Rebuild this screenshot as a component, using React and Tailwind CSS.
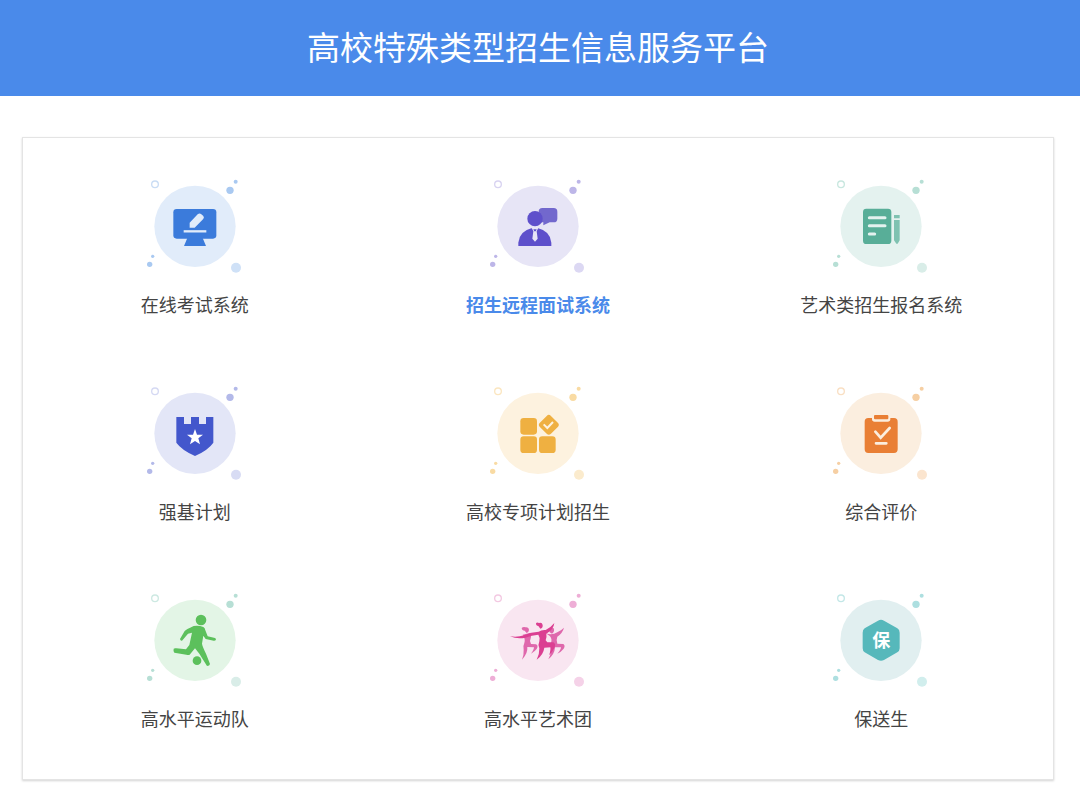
import React from "react";

const ExamIcon = () => (
  <g fill="#3b7bdb">
    <rect x="115" y="108" width="129" height="89" rx="10" />
    <path d="M157 195 L203 195 L213 219 L147 219 Z" />
    <path d="M146 175 H214" stroke="#e1ecfa" strokeWidth="7" />
    <path
      d="M164 164 L164 149 L188 124 Q194 119 199 124 L205 129 Q209 134 204 139 L179 164 Z"
      fill="#e1ecfa"
    />
  </g>
);

const InterviewIcon = () => (
  <g fill="#5e50cb">
    <path
      d="M193 105 H227 Q238 105 238 116 V137 Q238 148 227 148 H215 L196 157 V148 H190 Q182 148 182 140 V116 Q182 105 193 105 Z"
      fill="#7268cd"
    />
    <circle cx="171" cy="137" r="23" />
    <path d="M121 219 V209 Q124 175 160 166 H181 Q217 175 220 209 V219 Z" />
    <path d="M160 163 H182 L176 175 L179 197 L171 206 L163 197 L166 175 Z" fill="#e7e5f6" />
    <path d="M166 169 H176 L173 175 H169 Z" />
  </g>
);

const SignUpIcon = () => (
  <g>
    <rect x="126" y="107" width="85" height="106" rx="10" fill="#58ae98" />
    <path
      d="M145 134 H192 M145 158 H192 M145 183 H161"
      stroke="#e4f2ef"
      strokeWidth="9"
      strokeLinecap="round"
    />
    <path d="M219 126 H236 V136 H219 Z M219 141 H236 V202 L230 212 H226 L219 202 Z" fill="#7fc2b1" />
  </g>
);

const StrongBaseIcon = () => (
  <g>
    <path
      d="M124 111 H147 V132 H168 V111 H192 V132 H213 V111 H235 V188 Q220 210 180 228 Q140 210 124 188 Z"
      fill="#4357cc"
    />
    <path
      d="M180 147 L186 164 L204 164 L190 175 L195 193 L180 183 L165 193 L170 175 L156 164 L174 164 Z"
      fill="#fff"
    />
  </g>
);

const SpecialPlanIcon = () => (
  <g fill="#efb041">
    <rect x="127" y="114" width="50" height="50" rx="10" />
    <rect x="127" y="169" width="50" height="50" rx="10" />
    <rect x="183" y="169" width="50" height="50" rx="10" />
    <rect x="189" y="111" width="47" height="47" rx="9" transform="rotate(45 212.5 134.5)" />
    <path d="M197 133 L208 144 L225 126" fill="none" stroke="#fdf2df" strokeWidth="6" />
  </g>
);

const EvaluationIcon = () => (
  <g fill="#e97f35">
    <path d="M142 114 H153 V118 Q153 125 161 125 H200 Q208 125 208 118 V114 H219 Q230 114 230 125 V208 Q230 219 219 219 H142 Q131 219 131 208 V125 Q131 114 142 114 Z" />
    <rect x="159" y="105" width="43" height="13" rx="3" />
    <path
      d="M163 155 L179 173 L206 144 M165 190 H196"
      fill="none"
      stroke="#fbeedf"
      strokeWidth="8"
      strokeLinecap="round"
    />
  </g>
);

const SportsIcon = () => (
  <g fill="#5cc05c">
    <circle cx="198" cy="99" r="16" />
    <path d="M176 117 Q191 114 205 120 Q210 123 211 130 L218 148 L240 153 Q245 155 242 160 Q239 162 236 161 L212 156 L205 146 L201 170 Q203 180 213 200 L225 231 Q224 237 216 237 L193 200 L180 184 L164 203 Q161 205 154 203 L118 197 Q114 194 116 185 Q118 183 124 184 L153 187 L163 174 L171 137 L159 140 L141 161 Q136 162 135 156 L149 132 Q152 128 176 117 Z" />
    <circle cx="186" cy="221" r="13" />
  </g>
);

const ArtIcon = () => (
  <g>
    {/* Left dancer */}
    <g fill="#df68ac">
      <path d="M131 123 Q136 118 143 121 Q152 120 153 129 Q152 137 146 138 L140 131 Q132 131 131 123 Z" />
      <path d="M134 143 L158 137 Q161 151 156 162 L159 171 L174 172 Q182 176 176 186 Q170 194 159 200 Q168 188 168 181 L148 180 Q150 199 132 218 Q138 202 137 188 Q134 178 139 168 Q143 156 134 143 Z" />
    </g>

    {/* Right dancer */}
    <g fill="#df68ac">
      <path d="M213 125 Q220 118 227 124 Q231 134 222 140 L215 136 Z" />
      <path d="M204 139 Q222 146 238 136 Q250 130 258 122 Q254 138 238 149 Q234 158 238 170 L256 171 Q263 176 257 185 Q250 194 238 200 Q249 188 249 181 L231 181 Q230 202 211 217 Q219 202 218 188 Q214 178 219 168 Q223 156 216 148 Z" />
    </g>

    {/* Middle dancer */}
    <g fill="#db3f92">
      <path d="M174 109 Q177 104 183 108 Q192 105 194 114 Q195 124 187 125 L181 117 Q174 117 174 109 Z" />
      <path d="M96 148 Q120 151 138 145 Q160 134 182 134 Q190 128 203 129 Q219 121 229 108 Q227 128 205 140 Q207 151 203 160 L208 166 L226 166 Q235 171 229 183 Q223 195 213 205 Q219 189 218 181 L199 182 Q196 204 176 218 Q185 200 184 184 Q179 174 184 163 Q187 152 181 143 Q162 144 142 152 Q118 157 96 148 Z" />
    </g>
  </g>
);

const RecommendIcon = () => (
  <g>
    <path
      d="M171 101 Q180 96 189 101 L229 124 Q236 128 236 137 V184 Q236 192 229 196 L189 219 Q180 224 171 219 L131 196 Q125 192 125 184 V137 Q125 128 131 124 Z"
      fill="#56b8bb"
    />
    <text
      x="181"
      y="180"
      textAnchor="middle"
      fill="#fff"
      className="font-bold text-[54px]"
    >
      保
    </text>
  </g>
);

const systems = [
  { name: "在线考试系统", icon: ExamIcon, bg: "#e1ecfa", dot: "#a9c9f1", pale: "#cfe1f7", ring: "#c9dcf4" },
  { name: "招生远程面试系统", icon: InterviewIcon, bg: "#e7e5f6", dot: "#bdb6e8", pale: "#dcd8f3", ring: "#d8d3f1", active: true },
  { name: "艺术类招生报名系统", icon: SignUpIcon, bg: "#e4f2ef", dot: "#b7dfd5", pale: "#d9ede8", ring: "#c8e7df" },
  { name: "强基计划", icon: StrongBaseIcon, bg: "#e3e6f7", dot: "#b3b9e9", pale: "#d8dcf4", ring: "#d5d9f3" },
  { name: "高校专项计划招生", icon: SpecialPlanIcon, bg: "#fdf2df", dot: "#f9dba3", pale: "#fbebcd", ring: "#fbe6c0" },
  { name: "综合评价", icon: EvaluationIcon, bg: "#fbeedf", dot: "#f6cfa3", pale: "#fbe5cf", ring: "#f9dfc3" },
  { name: "高水平运动队", icon: SportsIcon, bg: "#e3f5e6", dot: "#b7dfd5", pale: "#d9ede8", ring: "#cde9e2" },
  { name: "高水平艺术团", icon: ArtIcon, bg: "#f9e6f1", dot: "#eeaed6", pale: "#f5d2e8", ring: "#f3c9e2" },
  { name: "保送生", icon: RecommendIcon, bg: "#e1eff0", dot: "#addfe0", pale: "#d1eeed", ring: "#c3e7e7" },
];

const SystemItem = ({ system }) => {
  const Icon = system.icon;

  return (
    <a href="#" className="flex flex-col items-center pt-[35px] pb-[27px]">
      <svg viewBox="0 0 360 315" className="w-[120px] h-[105px]" aria-hidden="true">
        {/* Round background */}
        <circle cx="180" cy="160" r="122" fill={system.bg} />

        {/* Dots around it */}
        <circle cx="60" cy="34" r="10" fill="none" stroke={system.ring} strokeWidth="4" />
        <circle cx="285" cy="52" r="11" fill={system.dot} />
        <circle cx="302" cy="26" r="6" fill={system.dot} />
        <circle cx="53" cy="250" r="5" fill={system.dot} />
        <circle cx="44" cy="274" r="8" fill={system.dot} />
        <circle cx="303" cy="284" r="15" fill={system.pale} />

        <Icon />
      </svg>
      <span
        className={`mt-3 text-[18px] leading-7 ${
          system.active ? "font-bold text-[#4a8aea]" : "text-[#444444]"
        }`}
      >
        {system.name}
      </span>
    </a>
  );
};

const App = () => {
  return (
    <div className="bg-white font-['Noto_Sans_CJK_SC',sans-serif]">
      {/* Header */}
      <header className="bg-[#4a8aea] h-24 pr-1 pb-1 flex items-center justify-center">
        <h1 className="text-white text-[33px] leading-none">高校特殊类型招生信息服务平台</h1>
      </header>

      {/* Systems */}
      <main className="pt-[41px] pb-6 pl-[22px] pr-[26px]">
        <div className="grid grid-cols-3 pb-5 border border-[#e4e4e4] shadow-[0_1px_2px_#d4d4d4]">
          {systems.map((system) => (
            <SystemItem key={system.name} system={system} />
          ))}
        </div>
      </main>
    </div>
  );
};

export default App;
